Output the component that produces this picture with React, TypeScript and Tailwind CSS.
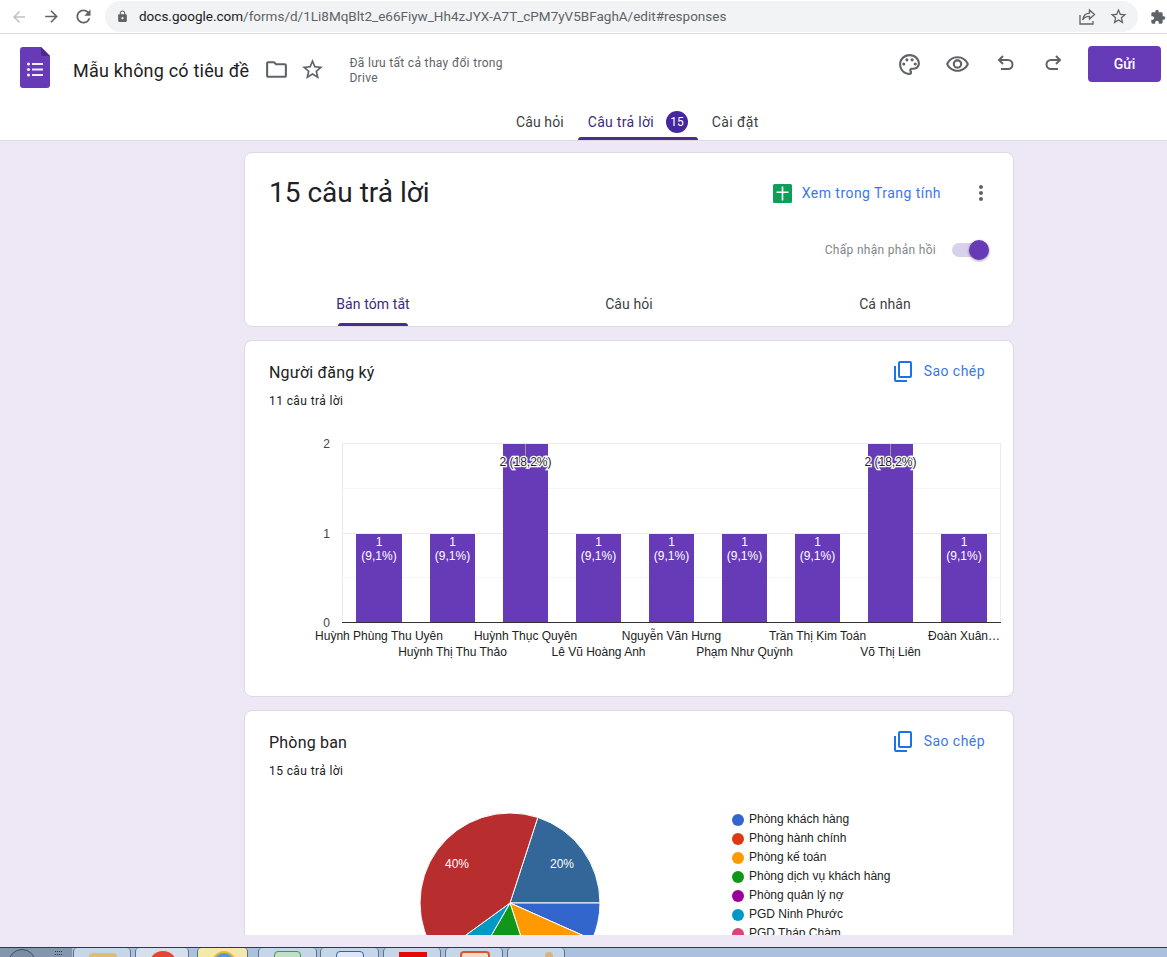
import React from 'react';
import {
  MdArrowBack,
  MdArrowForward,
  MdRefresh,
  MdLock,
  MdStarBorder,
  MdExtension,
  MdOutlineFolder,
  MdOutlinePalette,
  MdOutlineVisibility,
  MdMoreVert,
} from 'react-icons/md';

const barData = [
  { x: 356, w: 46, v: 1, label: 'Huỳnh Phùng Thu Uyên', row: 0 },
  { x: 430, w: 45, v: 1, label: 'Huỳnh Thị Thu Thảo', row: 1 },
  { x: 503, w: 45, v: 2, label: 'Huỳnh Thục Quyên', row: 0 },
  { x: 576, w: 45, v: 1, label: 'Lê Vũ Hoàng Anh', row: 1 },
  { x: 649, w: 45, v: 1, label: 'Nguyễn Văn Hưng', row: 0 },
  { x: 722, w: 45, v: 1, label: 'Phạm Như Quỳnh', row: 1 },
  { x: 795, w: 45, v: 1, label: 'Trần Thị Kim Toán', row: 0 },
  { x: 868, w: 45, v: 2, label: 'Võ Thị Liên', row: 1 },
  { x: 941, w: 46, v: 1, label: 'Đoàn Xuân…', row: 0 },
];

const pieData = [
  { from: 18, to: 90, color: '#336699' },
  { from: 90, to: 114, color: '#3366cc' },
  { from: 114, to: 162, color: '#ff9900' },
  { from: 162, to: 210, color: '#109618' },
  { from: 210, to: 234, color: '#0099c6' },
  { from: 234, to: 378, color: '#b82e2e' },
];

const legend = [
  { name: 'Phòng khách hàng', color: 'bg-[#3366cc]' },
  { name: 'Phòng hành chính', color: 'bg-[#dc3912]' },
  { name: 'Phòng kế toán', color: 'bg-[#ff9900]' },
  { name: 'Phòng dịch vụ khách hàng', color: 'bg-[#109618]' },
  { name: 'Phòng quản lý nợ', color: 'bg-[#990099]' },
  { name: 'PGD Ninh Phước', color: 'bg-[#0099c6]' },
  { name: 'PGD Tháp Chàm', color: 'bg-[#dd4477]' },
];

const slicePath = (from: number, to: number) => {
  const r = 90;
  const pt = (a: number) => {
    const rad = (a * Math.PI) / 180;
    return `${90 + r * Math.sin(rad)} ${90 - r * Math.cos(rad)}`;
  };
  return `M90 90 L${pt(from)} A${r} ${r} 0 ${to - from > 180 ? 1 : 0} 1 ${pt(to)} Z`;
};

const FormsLogo = () => (
  <svg width="30" height="41" viewBox="0 0 30 41">
    <path d="M3 0h18l9 9v29a3 3 0 0 1-3 3H3a3 3 0 0 1-3-3V3a3 3 0 0 1 3-3z" fill="#673ab7" />
    <path d="M21 0l9 9h-7a2 2 0 0 1-2-2z" fill="#4a2a8e" />
    <g fill="#f1ecf9">
      <circle cx="8.5" cy="17" r="1.6" />
      <circle cx="8.5" cy="22.5" r="1.6" />
      <circle cx="8.5" cy="28" r="1.6" />
      <rect x="12" y="16" width="11" height="2" />
      <rect x="12" y="21.5" width="11" height="2" />
      <rect x="12" y="27" width="11" height="2" />
    </g>
  </svg>
);

const SheetsIcon = () => (
  <svg width="19" height="19" viewBox="0 0 19 19">
    <rect width="19" height="19" rx="1.5" fill="#0f9d58" />
    <path d="M8.7 2.5h1.6v5h5.2v1.6h-5.2v7.4H8.7V9.100H3.500V7.500h5.200z" fill="#fff" />
  </svg>
);

const CopyIcon = () => (
  <svg width="18" height="21" viewBox="0 0 18 21" fill="none" stroke="#1a73e8" strokeWidth="2">
    <rect x="5" y="1" width="12" height="15" rx="1" />
    <path d="M1 5v14a1 1 0 0 0 1 1h11" />
  </svg>
);

const UndoIcon = () => (
  <svg width="20" height="20" viewBox="0 0 20 20" fill="none" stroke="#5f6368" strokeWidth="2">
    <path d="M7 2L3 6l4 4" />
    <path d="M3 6h9a4.500 4.500 0 0 1 0 9H5" />
  </svg>
);

const RedoIcon = () => (
  <svg width="20" height="20" viewBox="0 0 20 20" fill="none" stroke="#5f6368" strokeWidth="2">
    <path d="M13 2l4 4-4 4" />
    <path d="M17 6H8a4.500 4.500 0 0 0 0 9h7" />
  </svg>
);

const ShareIcon = () => (
  <svg width="17" height="17" viewBox="0 0 17 17" fill="none" stroke="#5f6368" strokeWidth="1.300">
    <path d="M1 7v9h13v-3" />
    <path d="M10.500 2l5 4.500-5 4.500V8.300C7 8.300 5 9.500 3.800 12c.4-4 2.700-6.500 6.700-6.800z" />
  </svg>
);

const CopyButton = () => (
  <div className="flex items-center">
    <CopyIcon />
    <span className="ml-[12px] text-[14px] tracking-[0.45px] text-[#3b78e7]">Sao chép</span>
  </div>
);

const BarChart = () => (
  <svg width="768" height="240" viewBox="245 430 768 240" className="block font-['Liberation_Sans',Arial,sans-serif]">
    <line x1="342" x2="1001" y1="443.5" y2="443.5" stroke="#ebebeb" />
    <line x1="342" x2="1001" y1="488.5" y2="488.5" stroke="#f5f5f5" />
    <line x1="342" x2="1001" y1="533.5" y2="533.5" stroke="#ebebeb" />
    <line x1="342" x2="1001" y1="577.5" y2="577.5" stroke="#f5f5f5" />
    <line x1="342.5" x2="342.5" y1="443" y2="622" stroke="#ebebeb" />
    <line x1="1000.5" x2="1000.5" y1="443" y2="622" stroke="#ebebeb" />
    {['2', '1', '0'].map((t, i) => (
      <text key={t} x="330" y={448 + i * 89.5} fontSize="12" fill="#444" textAnchor="end">
        {t}
      </text>
    ))}
    {barData.map((b) => {
      const cx = b.x + b.w / 2;
      return (
        <g key={b.label}>
          <rect x={b.x} y={b.v === 2 ? 444 : 534} width={b.w} height={b.v === 2 ? 178 : 88} fill="#673ab7" />
          {b.v === 1 ? (
            <>
              <text x={cx} y="546" fontSize="12" fill="#fff" textAnchor="middle">1</text>
              <text x={cx} y="560" fontSize="12" fill="#fff" textAnchor="middle">(9,1%)</text>
            </>
          ) : (
            <>
              <line x1={cx} x2={cx} y1="444" y2="456" stroke="#999" />
              <text
                x={cx}
                y="466"
                fontSize="12"
                fill="#222"
                stroke="#fff"
                strokeWidth="2.500"
                textAnchor="middle"
                style={{ paintOrder: 'stroke' }}
              >
                2 (18,2%)
              </text>
            </>
          )}
          <text x={cx} y={b.row === 0 ? 640 : 656} fontSize="12" fill="#222" textAnchor="middle">
            {b.label}
          </text>
        </g>
      );
    })}
    <line x1="342" x2="1001" y1="622.5" y2="622.5" stroke="#333" />
  </svg>
);

const PieChart = () => (
  <svg width="180" height="180" viewBox="0 0 180 180" className="block shrink-0 font-['Liberation_Sans',Arial,sans-serif]">
    {pieData.map((s) => (
      <path key={s.from} d={slicePath(s.from, s.to)} fill={s.color} stroke="#fff" strokeWidth="1" />
    ))}
    <text x="37" y="55" fontSize="12" fill="#fff" textAnchor="middle">40%</text>
    <text x="142" y="55" fontSize="12" fill="#fff" textAnchor="middle">20%</text>
  </svg>
);

const Taskbar = () => {
  const buttons = [
    { w: 'w-[58px]', ml: 'ml-[1px]', bg: 'bg-[#c5d6e8]', icon: <div className="ml-[15px] mt-[5px] w-[28px] h-[8px] bg-[#d9bf6e] rounded-t-sm" /> },
    { w: 'w-[54px]', ml: 'ml-[4px]', bg: 'bg-[#d5e0ec]', icon: <div className="ml-[13px] mt-[3px] w-[28px] h-[28px] bg-[#ea4335] rounded-full" /> },
    { w: 'w-[51px]', ml: 'ml-[8px]', bg: 'bg-[#f3e9a8]', icon: <div className="ml-[14px] mt-[3px] w-[24px] h-[24px] bg-[#4a9ed8] rounded-full border-2 border-[#f2b632]" /> },
    { w: 'w-[59px]', ml: 'ml-[10px]', bg: 'bg-[#c5d6e8]', icon: <div className="ml-[15px] mt-[3px] w-[27px] h-[10px] bg-[#bfe0c4] border border-[#3f9a55] rounded-t-sm" /> },
    { w: 'w-[59px]', ml: 'ml-[3px]', bg: 'bg-[#c5d6e8]', icon: <div className="ml-[15px] mt-[3px] w-[28px] h-[10px] bg-[#dbe7f6] border border-[#2b63b8] rounded-t-sm" /> },
    { w: 'w-[58px]', ml: 'ml-[4px]', bg: 'bg-[#c5d6e8]', icon: <div className="ml-[15px] mt-[4px] w-[28px] h-[10px] bg-[#e50a0a]" /> },
    { w: 'w-[58px]', ml: 'ml-[4px]', bg: 'bg-[#c5d6e8]', icon: <div className="ml-[14px] mt-[3px] w-[30px] h-[12px] bg-[#f4d9c5] border-2 border-[#d8562a] rounded-t" /> },
    { w: 'w-[58px]', ml: 'ml-[4px]', bg: 'bg-[#c5d6e8]', icon: <div className="ml-[37px] mt-[4px] w-[8px] h-[10px] bg-[#d9b27c] rounded-t-full" /> },
  ];
  return (
    <div className="h-[10px] shrink-0 flex overflow-hidden bg-[#a9c1dc] border-t border-[#2e3a48]">
      <div className="w-[72px] bg-[#8297ad] overflow-hidden flex justify-between pr-[10px]">
        <div className="ml-[8px] mt-[1px] w-[28px] h-[28px] rounded-full bg-[#7a8ea3] border border-[#33506e]" />
        <div className="mt-[3px] w-[7px] h-[4px] border-y border-dotted border-[#2e3a48]" />
      </div>
      {buttons.map((b, i) => (
        <div key={i} className={`${b.w} ${b.ml} ${b.bg} h-[20px] rounded-t-sm border-x border-[#5d6f82] overflow-hidden`}>
          {b.icon}
        </div>
      ))}
    </div>
  );
};

export default function App() {
  return (
    <div className="w-[1167px] h-[957px] overflow-hidden flex flex-col bg-[#ede7f6] font-['Roboto',Arial,sans-serif] text-[#202124]">
      {/* browser toolbar */}
      <div className="h-[34px] shrink-0 flex items-center bg-white border-b border-[#dadce0] text-[#5f6368]">
        <MdArrowBack className="ml-[10px] w-[18px] h-[18px] text-[#bdc1c6]" />
        <MdArrowForward className="ml-[14px] w-[19px] h-[19px]" />
        <MdRefresh className="ml-[12px] w-[21px] h-[21px]" />
        <div className="ml-[11px] w-[1033px] h-[31px] rounded-full bg-[#f1f3f4] flex items-center">
          <MdLock className="ml-[11px] w-[13px] h-[13px]" />
          <span className="ml-[10px] text-[13.5px] whitespace-nowrap">
            <span className="text-[#202124]">docs.google.com</span>/forms/d/1Li8MqBlt2_e66Fiyw_Hh4zJYX-A7T_cPM7yV5BFaghA/edit#responses
          </span>
          <div className="ml-auto"><ShareIcon /></div>
          <MdStarBorder className="ml-[13px] mr-[10px] w-[19px] h-[19px]" />
        </div>
        <MdExtension className="ml-[12px] w-[16px] h-[16px]" />
      </div>

      {/* forms header */}
      <header className="h-[107px] shrink-0 bg-white border-b border-[#dadce0] flex flex-col">
        <div className="h-[70px] flex items-start">
          <div className="ml-[20px] mt-[13px]"><FormsLogo /></div>
          <span className="ml-[23px] mt-[25px] text-[18px] leading-[24px] tracking-[0.2px] whitespace-nowrap">Mẫu không có tiêu đề</span>
          <MdOutlineFolder className="ml-[15px] mt-[23px] w-[25px] h-[25px] text-[#5f6368]" />
          <MdStarBorder className="ml-[11px] mt-[23px] w-[25px] h-[25px] text-[#5f6368]" />
          <div className="ml-[24px] mt-[22px] w-[170px] text-[12px] leading-[15px] tracking-[0.33px] text-[#5f6368]">
            Đã lưu tất cả thay đổi trong Drive
          </div>
          <div className="ml-auto mt-[12px] flex items-center text-[#5f6368]">
            <MdOutlinePalette className="w-[25px] h-[25px]" />
            <MdOutlineVisibility className="ml-[23px] w-[25px] h-[25px]" />
            <div className="ml-[26px]"><UndoIcon /></div>
            <div className="ml-[27px]"><RedoIcon /></div>
            <div className="ml-[25px] mr-[6px] w-[73px] h-[36px] rounded bg-[#673ab7] text-white text-[14px] font-medium flex items-center justify-center">
              Gửi
            </div>
          </div>
        </div>
        <nav className="flex-1 flex items-stretch pl-[516px] text-[14px] text-[#3c4043]">
          <div className="flex items-center tracking-[0.1px]">Câu hỏi</div>
          <div className="relative ml-[14px] w-[120px] flex items-center pl-[10px] tracking-[0.3px] text-[#3c2a78]">
            Câu trả lời
            <span className="ml-[12px] w-[22px] h-[22px] rounded-full bg-[#4527a0] text-white text-[12px] tracking-normal flex items-center justify-center">15</span>
            <div className="absolute left-0 right-0 bottom-0 h-[3px] rounded-t bg-[#4a2b8e]" />
          </div>
          <div className="flex items-center ml-[14px] tracking-[0.4px]">Cài đặt</div>
        </nav>
      </header>

      {/* page */}
      <main className="h-[794px] shrink-0 overflow-hidden pt-[11px] pl-[244px]">
        <div className="w-[770px] flex flex-col gap-[13px]">
          <section className="h-[175px] bg-white border border-[#dadce0] rounded-lg flex flex-col">
            <div className="flex items-center pt-[20px] pl-[24px] pr-[20px]">
              <h1 className="text-[28px] leading-[40px] font-normal whitespace-nowrap">15 câu trả lời</h1>
              <div className="ml-auto"><SheetsIcon /></div>
              <span className="ml-[10px] text-[14px] tracking-[0.45px] text-[#3b78e7]">Xem trong Trang tính</span>
              <MdMoreVert className="ml-[28px] w-[24px] h-[24px] text-[#5f6368]" />
            </div>
            <div className="flex items-center justify-end mt-[28px] pr-[28px]">
              <span className="text-[12px] tracking-[0.3px] text-[#80868b]">Chấp nhận phản hồi</span>
              <div className="relative ml-[16px] w-[33px] h-[14px] rounded-full bg-[#d9d0eb]">
                <div className="absolute right-[-4px] top-[-3px] w-[20px] h-[20px] rounded-full bg-[#673ab7] shadow-[0_1px_3px_rgba(0,0,0,0.4)]" />
              </div>
            </div>
            <div className="grid grid-cols-3 flex-1 mt-[35px] text-[14px] tracking-[0.1px] text-[#3c4043] text-center">
              <div className="relative text-[#3c2a78]">
                Bản tóm tắt
                <div className="absolute left-[93px] w-[70px] bottom-0 h-[3px] rounded-t bg-[#4a2b8e]" />
              </div>
              <div>Câu hỏi</div>
              <div>Cá nhân</div>
            </div>
          </section>

          <section className="h-[357px] bg-white border border-[#dadce0] rounded-lg">
            <div className="flex items-start justify-between pt-[20px] pl-[24px] pr-[28px]">
              <h2 className="text-[16px] leading-[24px] tracking-[0.2px] font-normal">Người đăng ký</h2>
              <CopyButton />
            </div>
            <div className="pl-[24px] mt-[8px] text-[12px] leading-[16px] tracking-[0.4px]">11 câu trả lời</div>
            <div className="mt-[21px]"><BarChart /></div>
          </section>

          <section className="h-[357px] bg-white border border-[#dadce0] rounded-lg">
            <div className="flex items-start justify-between pt-[20px] pl-[24px] pr-[28px]">
              <h2 className="text-[16px] leading-[24px] tracking-[0.2px] font-normal">Phòng ban</h2>
              <CopyButton />
            </div>
            <div className="pl-[24px] mt-[8px] text-[12px] leading-[16px] tracking-[0.4px]">15 câu trả lời</div>
            <div className="flex items-start mt-[34px]">
              <div className="ml-[175px]"><PieChart /></div>
              <ul className="ml-[132px] -mt-[3px] flex flex-col font-['Liberation_Sans',Arial,sans-serif] text-[12px] leading-[19px] text-[#222]">
                {legend.map((l) => (
                  <li key={l.name} className="flex items-center">
                    <span className={`w-[12px] h-[12px] rounded-full ${l.color}`} />
                    <span className="ml-[5px] whitespace-nowrap">{l.name}</span>
                  </li>
                ))}
              </ul>
            </div>
          </section>
        </div>
      </main>

      <div className="h-[12px] shrink-0" />
      <Taskbar />
    </div>
  );
}
